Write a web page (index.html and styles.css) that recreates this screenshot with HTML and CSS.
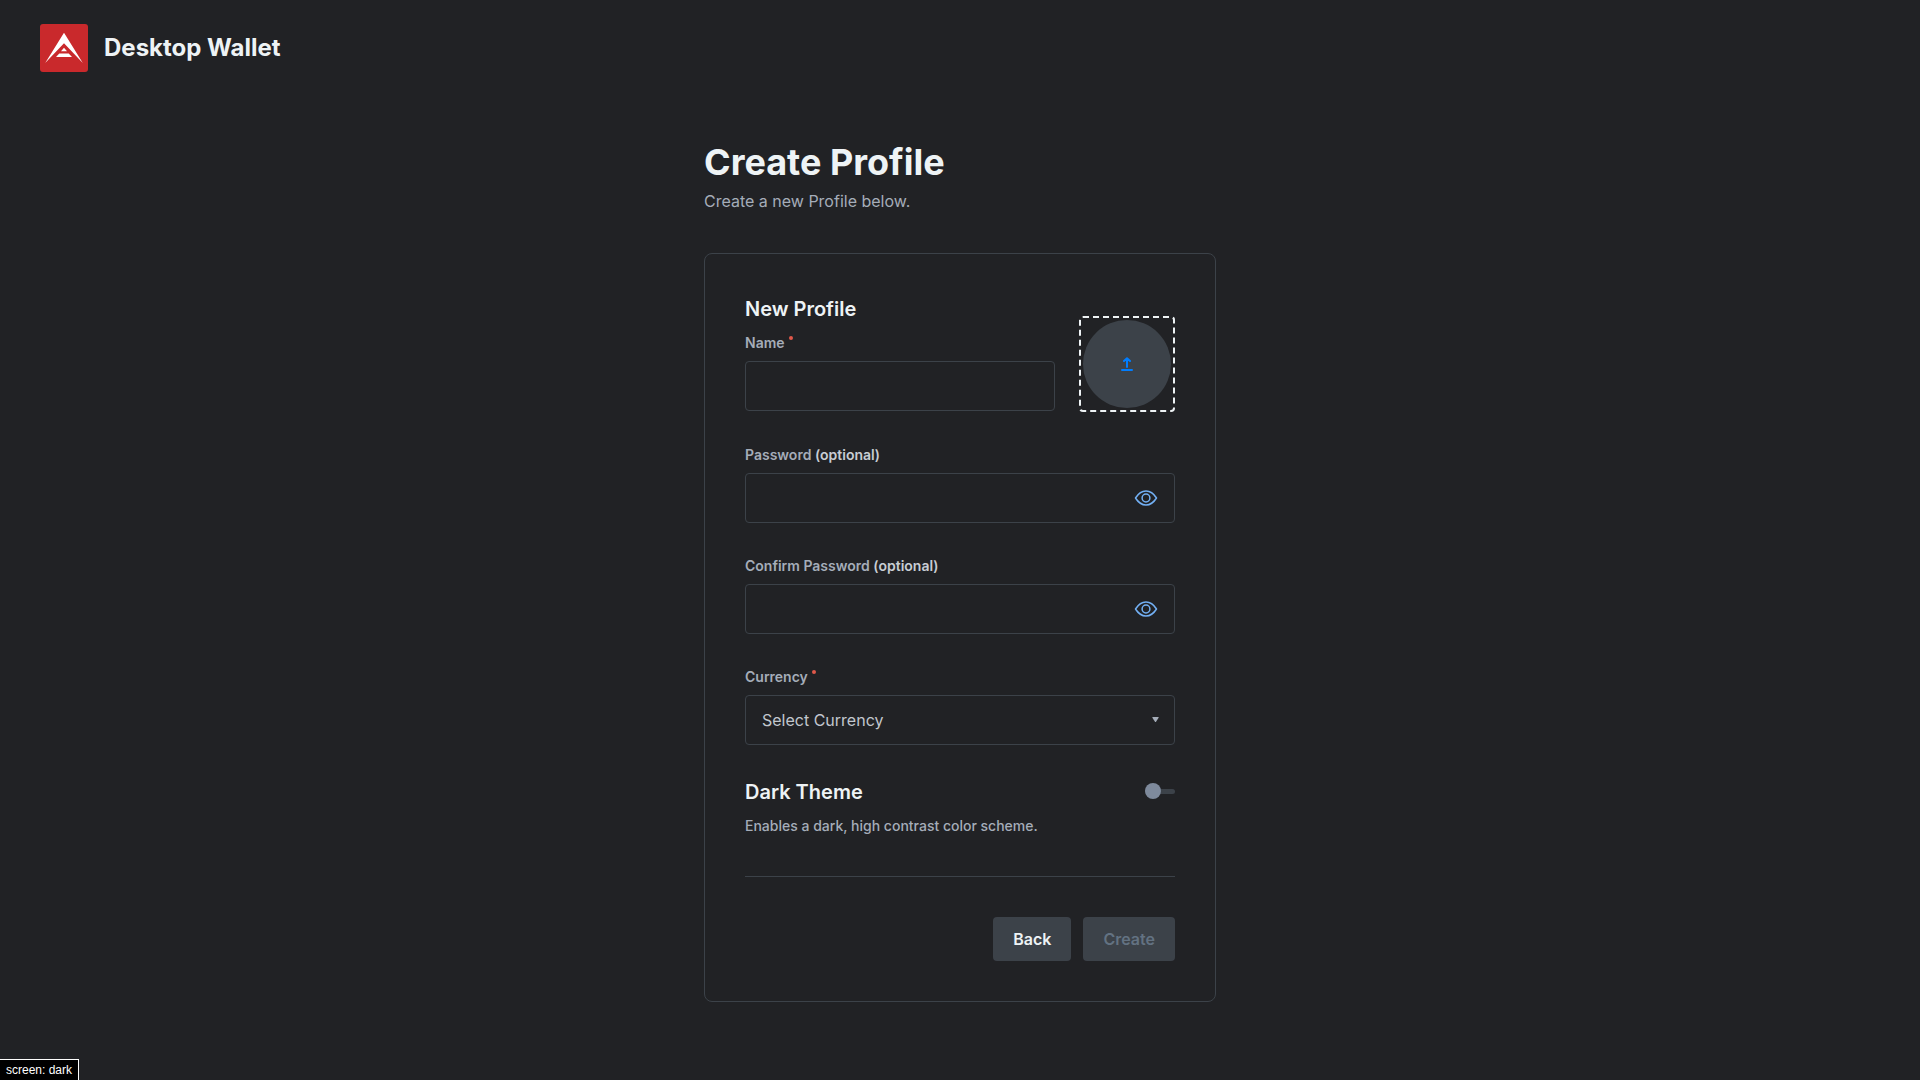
FILE: index.html
```html
<!DOCTYPE html>
<html lang="en">
<head>
<meta charset="utf-8">
<meta name="viewport" content="width=device-width, initial-scale=1">
<title>Desktop Wallet</title>
<link rel="stylesheet" href="styles.css">
</head>
<body>
<header class="navbar">
  <svg class="logo" viewBox="0 0 48 48" aria-hidden="true">
    <rect width="48" height="48" rx="3" fill="#c9292c"/>
    <path fill="#fff" d="M24 8.700 42.800 39 24 19.300 5.200 39z"/>
    <path fill="#fff" d="M24 23.700 27 27.200H21zM19.300 29.500H28.700L32 33H16z"/>
  </svg>
  <span class="brand">Desktop Wallet</span>
</header>

<main class="page">
  <h1 class="page-title">Create Profile</h1>
  <p class="page-subtitle">Create a new Profile below.</p>

  <form class="card">
    <div class="profile-row">
      <div class="profile-main">
        <h2 class="section-title">New Profile</h2>
        <div class="field">
          <label class="label required" for="name">Name</label>
          <input class="control" id="name" type="text">
        </div>
      </div>
      <button class="upload" type="button" aria-label="Upload avatar">
        <span class="upload-circle">
          <svg width="12" height="14" viewBox="0 0 12 14" fill="none" stroke="#007dff" stroke-width="2" stroke-linecap="round" stroke-linejoin="round" aria-hidden="true">
            <path d="M6 10V1.500M3 4 6 1.200 9 4M1 13H11"/>
          </svg>
        </span>
      </button>
    </div>

    <div class="field">
      <label class="label" for="password">Password <span class="optional">(optional)</span></label>
      <div class="control-wrap">
        <input class="control" id="password" type="password">
        <button class="reveal" type="button" aria-label="Show password">
          <svg width="24" height="18" viewBox="0 0 24 18" fill="none" stroke="#73b0f4" stroke-width="1.500" aria-hidden="true">
            <path stroke-linejoin="round" d="M1.500 9C4 5 7.500 2 12 2S20 5 22.500 9C20 13 16.500 16 12 16S4 13 1.500 9z"/>
            <circle cx="12" cy="9" r="3.900"/>
          </svg>
        </button>
      </div>
    </div>

    <div class="field">
      <label class="label" for="confirm">Confirm Password <span class="optional">(optional)</span></label>
      <div class="control-wrap">
        <input class="control" id="confirm" type="password">
        <button class="reveal" type="button" aria-label="Show password confirmation">
          <svg width="24" height="18" viewBox="0 0 24 18" fill="none" stroke="#73b0f4" stroke-width="1.500" aria-hidden="true">
            <path stroke-linejoin="round" d="M1.500 9C4 5 7.500 2 12 2S20 5 22.500 9C20 13 16.500 16 12 16S4 13 1.500 9z"/>
            <circle cx="12" cy="9" r="3.900"/>
          </svg>
        </button>
      </div>
    </div>

    <div class="field">
      <label class="label required" for="currency">Currency</label>
      <div class="control-wrap">
        <select class="control" id="currency">
          <option>Select Currency</option>
        </select>
        <svg class="caret" width="7" height="6" viewBox="0 0 7 6" aria-hidden="true"><path fill="#a5adb9" d="M0.800 0H6.200Q7 0 6.600 0.800L4.200 4.500Q3.500 5.500 2.800 4.500L0.400 0.800Q0 0 0.800 0z"/></svg>
      </div>
    </div>

    <div class="theme">
      <div class="theme-head">
        <label class="section-title" for="dark">Dark Theme</label>
        <input class="toggle" id="dark" type="checkbox">
      </div>
      <p class="hint">Enables a dark, high contrast color scheme.</p>
    </div>

    <div class="actions">
      <button class="btn" type="button">Back</button>
      <button class="btn" type="submit" disabled>Create</button>
    </div>
  </form>
</main>

<div class="debug">screen: dark</div>
</body>
</html>
```

FILE: styles.css
```css
* {
  box-sizing: border-box;
}

body {
  margin: 0;
  min-height: 100vh;
  background: #212225;
  color: #eef3f5;
  font-family: Inter, sans-serif;
  font-size: 16px;
  line-height: 24px;
}

h1, h2, p {
  margin: 0;
}

button, input, select {
  font: inherit;
  color: inherit;
}

.navbar {
  display: flex;
  align-items: center;
  gap: 16px;
  padding: 24px 40px;
}

.logo {
  width: 48px;
  height: 48px;
}

.brand {
  font-size: 24px;
  font-weight: 700;
}

.page {
  max-width: 512px;
  margin: 0 auto;
  padding: 40px 0;
}

.page-title {
  font-size: 36px;
  font-weight: 700;
  line-height: 53px;
}

.page-subtitle {
  color: #a5adb9;
}

.card {
  display: flex;
  flex-direction: column;
  gap: 32px;
  margin-top: 40px;
  padding: 40px;
  border: 1px solid #3c4249;
  border-radius: 8px;
}

.profile-row {
  display: flex;
  gap: 24px;
}

.profile-main {
  display: flex;
  flex: 1;
  flex-direction: column;
  gap: 8px;
}

.section-title {
  font-size: 20px;
  font-weight: 600;
  line-height: 30px;
}

.field {
  display: flex;
  flex-direction: column;
  gap: 8px;
}

.label {
  color: #a5adb9;
  font-size: 14px;
  font-weight: 600;
  line-height: 21px;
}

.required::after {
  content: "";
  display: inline-block;
  width: 4px;
  height: 4px;
  margin-left: 4px;
  border-radius: 50%;
  background: #e0584a;
  vertical-align: 8px;
}

.optional {
  color: #c8cdd4;
}

.control {
  display: block;
  width: 100%;
  height: 50px;
  padding: 0 16px;
  border: 1px solid #3c4249;
  border-radius: 4px;
  outline: none;
  background: transparent;
  appearance: none;
}

select.control {
  color: #c2c7ce;
}

.control-wrap {
  display: grid;
  align-items: center;
}

.control-wrap > * {
  grid-area: 1 / 1;
}

.reveal {
  display: flex;
  justify-self: end;
  margin-right: 17px;
  padding: 0;
  border: 0;
  background: none;
}

.caret {
  justify-self: end;
  margin-right: 16px;
  pointer-events: none;
}

.upload {
  width: 96px;
  height: 96px;
  margin-top: 22px;
  padding: 2px;
  border: 2px dashed #eef3f5;
  border-radius: 4px;
  background: none;
}

.upload-circle {
  display: flex;
  align-items: center;
  justify-content: center;
  height: 88px;
  border-radius: 50%;
  background: #3c4249;
}

.theme {
  display: flex;
  flex-direction: column;
  gap: 8px;
}

.theme-head {
  display: flex;
  align-items: center;
  justify-content: space-between;
}

.toggle {
  display: grid;
  align-items: center;
  width: 30px;
  height: 16px;
  margin: 0 0 2px;
  appearance: none;
}

.toggle::before,
.toggle::after {
  content: "";
  grid-area: 1 / 1;
}

.toggle::before {
  height: 5px;
  border-radius: 3px;
  background: #3c4249;
}

.toggle::after {
  width: 16px;
  height: 16px;
  border-radius: 50%;
  background: #7e8a9c;
}

.hint {
  color: #a5adb9;
  font-size: 14px;
  font-weight: 500;
  line-height: 21px;
}

.actions {
  display: flex;
  justify-content: flex-end;
  gap: 12px;
  margin-top: 8px;
  padding-top: 40px;
  border-top: 1px solid #3c4249;
}

.btn {
  padding: 10px 20px;
  border: 0;
  border-radius: 4px;
  background: #3c4249;
  font-weight: 600;
}

.btn:disabled {
  color: #637282;
}

.debug {
  position: fixed;
  bottom: 0;
  left: 0;
  padding: 2px 6px;
  border: solid #fff;
  border-width: 1px 1px 0 0;
  background: #000;
  color: #fff;
  font-family: "Liberation Sans", sans-serif;
  font-size: 12px;
  line-height: 18px;
  padding: 1px 6px;
}
```
